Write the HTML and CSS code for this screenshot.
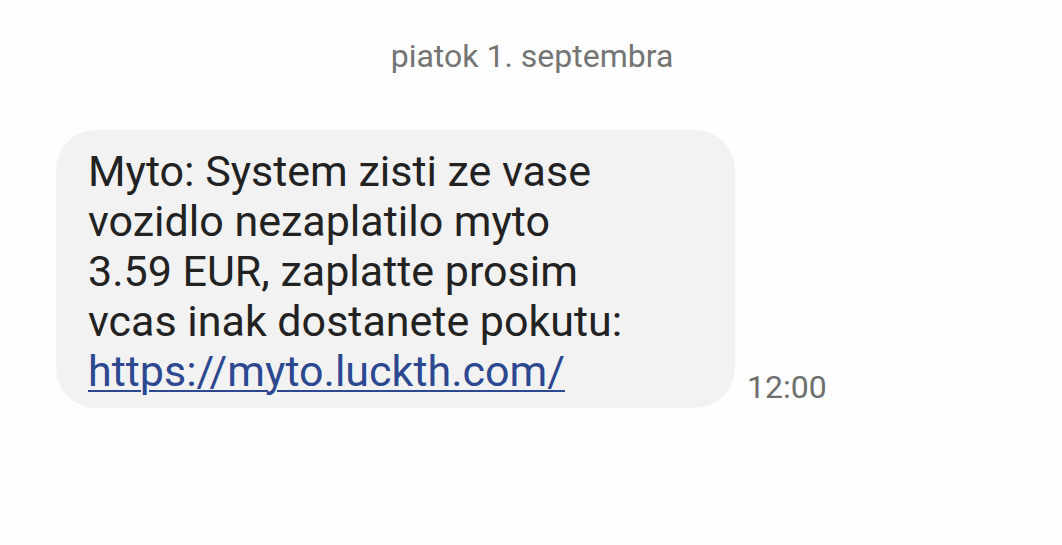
FILE: index.html
```html
<!DOCTYPE html>
<html lang="sk">
<head>
<meta charset="utf-8">
<link rel="stylesheet" href="styles.css">
</head>
<body>
<div class="screen">
  <div class="date">piatok 1. septembra</div>
  <div class="row">
    <div class="bubble">
      <p class="msg">Myto: System zisti ze vase<br>vozidlo nezaplatilo myto<br>3.59 EUR, zaplatte prosim<br>vcas inak dostanete pokutu:<br><a class="link" href="#">https://myto.luckth.com/</a></p>
    </div>
    <div class="time">12:00</div>
  </div>
</div>
</body>
</html>
```

FILE: styles.css
```css
html, body {
  margin: 0;
  padding: 0;
  background: #fefefe;
}
body {
  width: 1062px;
  height: 545px;
  overflow: hidden;
  font-family: Roboto, "Noto Sans", sans-serif;
}
.screen {
  display: flex;
  flex-direction: column;
  padding-top: 37px;
}
.date {
  text-align: center;
  font-size: 32px;
  line-height: 38px;
  color: #747474;
  padding-left: 2px;
}
.row {
  display: flex;
  align-items: flex-end;
  margin-top: 55px;
  padding-left: 56px;
}
.bubble {
  width: 679px;
  box-sizing: border-box;
  height: 278px;
  background: #f2f2f2;
  border-radius: 40px;
  padding: 16px 0 0 32px;
}
.msg {
  margin: 0;
  font-size: 43px;
  line-height: 50px;
  color: #222222;
}
.link {
  color: #2b4890;
  text-decoration: underline;
  text-decoration-thickness: 2px;
  text-underline-offset: 4px;
}
.time {
  margin-left: 12px;
  font-size: 32px;
  line-height: 38px;
  color: #6e6e6e;
  margin-bottom: 2px;
}
```
